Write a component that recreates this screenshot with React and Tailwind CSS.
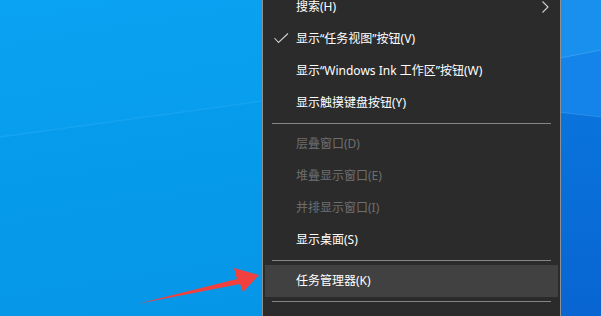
const items = [
  { label: '搜索(H)', submenu: true },
  { label: '显示“任务视图”按钮(V)', checked: true },
  { label: '显示“Windows Ink 工作区”按钮(W)' },
  { label: '显示触摸键盘按钮(Y)' },
  { sep: true },
  { label: '层叠窗口(D)', disabled: true },
  { label: '堆叠显示窗口(E)', disabled: true },
  { label: '并排显示窗口(I)', disabled: true },
  { label: '显示桌面(S)' },
  { sep: true },
  { label: '任务管理器(K)', hover: true },
  { sep: true },
  { label: '' },
]

function Wallpaper() {
  return (
    <svg className="absolute inset-0" width="601" height="316" viewBox="0 0 601 316">
      <defs>
        <linearGradient id="left" x1="0" y1="0" x2="0.3" y2="1">
          <stop offset="0" stopColor="#0aa2f2" />
          <stop offset="0.5" stopColor="#089ded" />
          <stop offset="1" stopColor="#0795e7" />
        </linearGradient>
        <linearGradient id="right" x1="0" y1="0" x2="0" y2="1">
          <stop offset="0" stopColor="#0a74dc" />
          <stop offset="1" stopColor="#0865d2" />
        </linearGradient>
      </defs>
      <rect width="601" height="316" fill="url(#left)" />
      <polygon points="0,138 330,92 330,316 0,316" fill="#0698e9" opacity="0.4" />
      <line x1="0" y1="137" x2="330" y2="92" stroke="#3db6f7" strokeWidth="1.5" opacity="0.25" />
      <rect x="540" width="61" height="316" fill="#1990ee" />
      <polygon points="540,62 601,50 601,316 540,316" fill="#1584ea" />
      <line x1="540" y1="62" x2="601" y2="50" stroke="#4aaaf4" strokeWidth="1" opacity="0.6" />
      <polygon points="540,110 601,117 601,316 540,316" fill="url(#right)" />
      <line x1="540" y1="110" x2="601" y2="117" stroke="#3a9bef" strokeWidth="1" opacity="0.6" />
    </svg>
  )
}

function Check() {
  return (
    <svg className="absolute left-[9px] top-[10px]" width="15" height="12" viewBox="0 0 15 12">
      <polyline points="0.5,5 4.5,9.5 14,0.5" fill="none" stroke="#d0d0d0" strokeWidth="1.1" />
    </svg>
  )
}

function Chevron() {
  return (
    <svg className="absolute right-[9px] top-[10px]" width="7" height="12" viewBox="0 0 7 12">
      <polyline points="0.5,0.5 6,6 0.5,11.5" fill="none" stroke="#d0d0d0" strokeWidth="1.1" />
    </svg>
  )
}

export default function App() {
  return (
    <div
      className="relative w-[601px] h-[316px] overflow-hidden"
      style={{ fontFamily: '"Segoe UI", "Noto Sans", "Noto Sans CJK SC", sans-serif' }}
    >
      <Wallpaper />
      <div className="relative flex">
        <div className="ml-[262px] mt-[-13px] w-[299px] shrink-0 border border-[#8f8f8f] bg-[#2b2b2b] px-[2px] pt-[3px]">
          {items.map((it, i) =>
            it.sep ? (
              <div key={i} className="h-[9px] flex items-center px-[7px]">
                <div className="h-px w-full bg-[#858585]" />
              </div>
            ) : (
              <div
                key={i}
                className={`relative h-8 flex items-center pl-[31px] text-[12px] leading-none ${
                  it.hover ? 'bg-[#414141]' : ''
                } ${it.disabled ? 'text-[#6e6e6e]' : 'text-white'}`}
              >
                {it.checked && <Check />}
                <span className="whitespace-pre">{it.label}</span>
                {it.submenu && <Chevron />}
              </div>
            )
          )}
        </div>
      </div>
      <svg className="absolute left-0 top-0 pointer-events-none" width="601" height="316" viewBox="0 0 601 316">
        <polygon
          points="137,304 237,279 234,268 259,275 243,292 240,284"
          fill="#f2403f"
        />
      </svg>
    </div>
  )
}
